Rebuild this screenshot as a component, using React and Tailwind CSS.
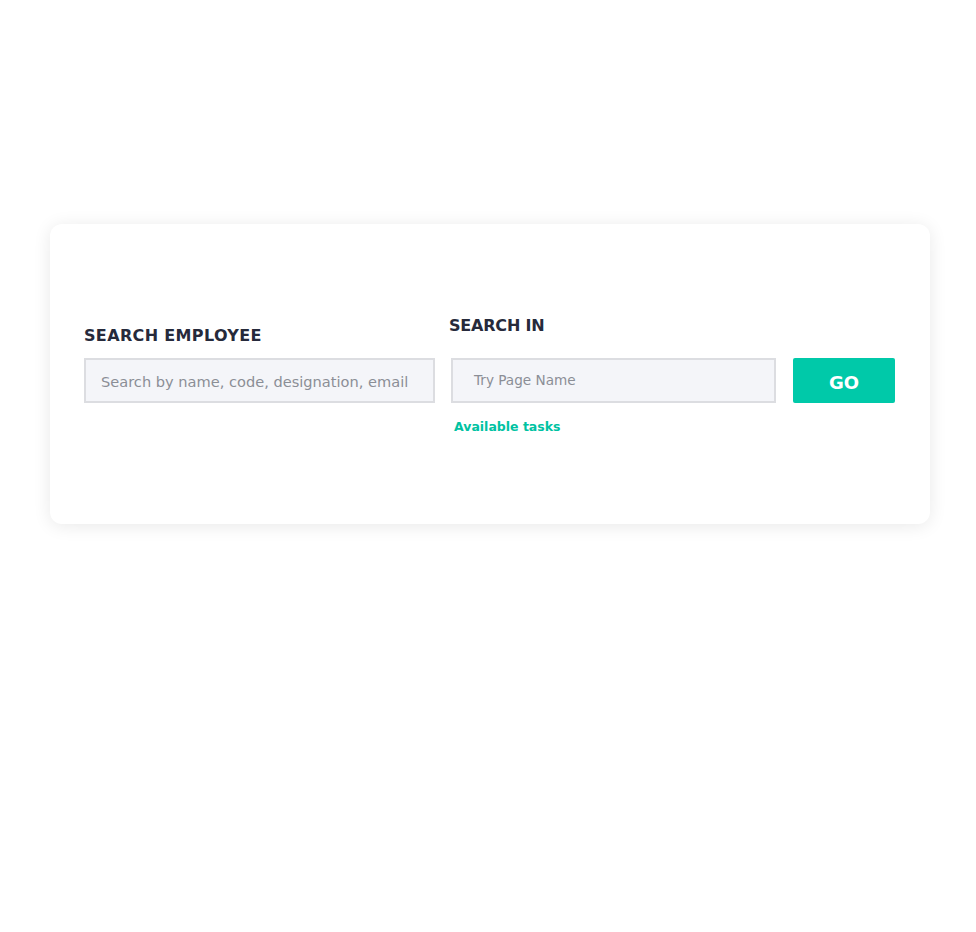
export default function App() {
  const font = { fontFamily: '"DejaVu Sans", "Noto Sans", sans-serif' };
  return (
    <div className="min-h-[932px] w-full bg-white" style={font}>
      <div className="pt-[224px] pl-[50px] pr-[46px]">
        <div className="h-[300px] rounded-[12px] bg-white shadow-[0_2px_18px_rgba(0,0,0,0.09)] pt-[92px] pl-[34px] pr-[35px]">
          <div className="flex items-start">
            <div className="w-[351px] pt-[10px]">
              <div className="h-[20px] leading-[20px] text-[16px] font-bold text-[#262a3b] tracking-[0.35px]">SEARCH EMPLOYEE</div>
              <div className="mt-[12px] h-[45px] flex items-center border-2 border-[#dcdde1] bg-[#f4f5f9] pl-[15px] pt-[2px] text-[14.6px] text-[#8b8e96]">
                Search by name, code, designation, email
              </div>
            </div>
            <div className="ml-[14px] flex-1">
              <div className="h-[20px] leading-[20px] text-[16px] font-bold text-[#262a3b] tracking-[-0.2px]">SEARCH IN</div>
              <div className="mt-[22px] flex items-start">
                <div className="ml-[2px] w-[325px] h-[45px] flex items-center border-2 border-[#dcdde1] bg-[#f4f5f9] pl-[21px] text-[13.6px] text-[#8b8e96]">
                  Try Page Name
                </div>
                <button className="ml-[17px] w-[102px] h-[45px] rounded-[2px] bg-[#00c9a9] text-white text-[18px] font-bold flex items-center justify-center pt-[3px]">
                  GO
                </button>
              </div>
              <div className="mt-[16px] ml-[5px] h-[16px] leading-[16px] text-[12.5px] font-bold text-[#00c2a2]">Available tasks</div>
            </div>
          </div>
        </div>
      </div>
    </div>
  );
}
